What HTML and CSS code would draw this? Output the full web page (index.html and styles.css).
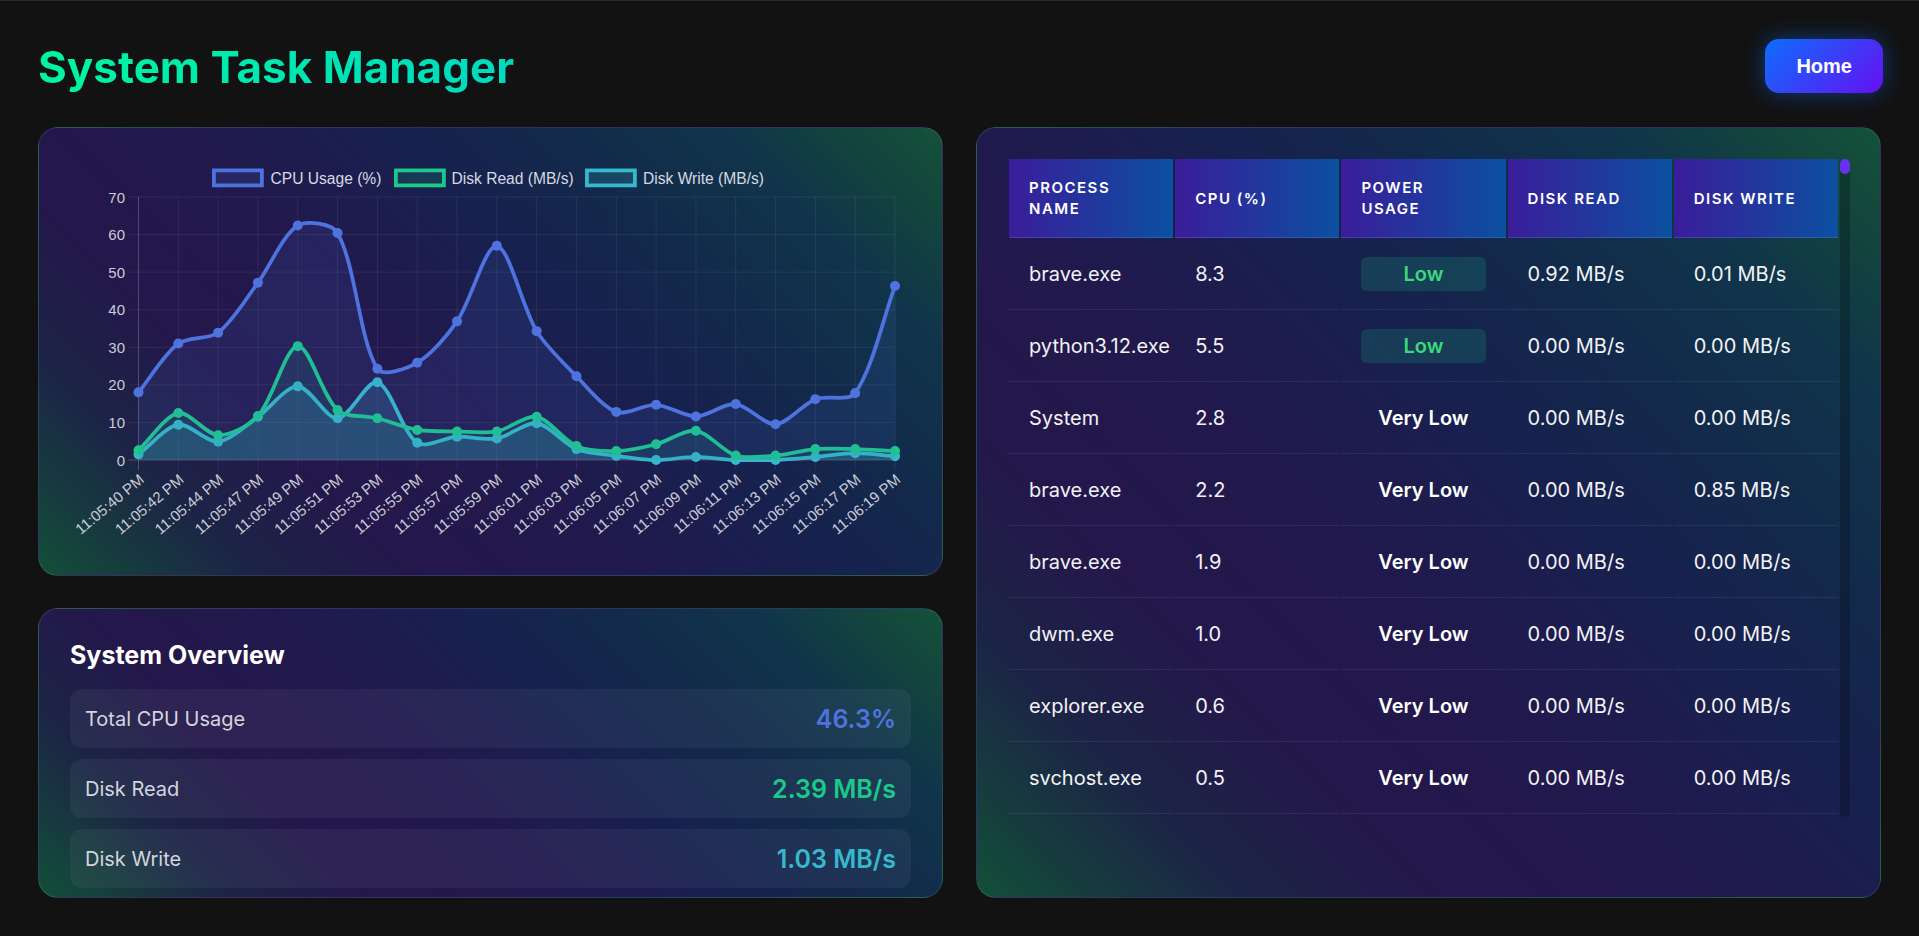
FILE: index.html
```html
<!DOCTYPE html>
<html lang="en">
<head>
<meta charset="utf-8">
<title>System Task Manager</title>
<link rel="stylesheet" href="styles.css">
</head>
<body>
<div class="page">
  <header class="topbar">
    <h1 class="title">System Task Manager</h1>
    <button class="home-btn" type="button">Home</button>
  </header>

  <main class="layout">
    <div class="left-col">
      <section class="card chart-card">
        <svg class="chart" viewBox="69 158 843 387" xmlns="http://www.w3.org/2000/svg">
          <g class="legend">
            <rect class="lg-box lg-cpu" x="213.9" y="170.4" width="48" height="15"/>
            <text class="lg-text" x="270.5" y="178">CPU Usage (%)</text>
            <rect class="lg-box lg-rd" x="395.9" y="170.4" width="48" height="15"/>
            <text class="lg-text" x="451.5" y="178">Disk Read (MB/s)</text>
            <rect class="lg-box lg-wr" x="586.9" y="170.4" width="48" height="15"/>
            <text class="lg-text" x="643" y="178">Disk Write (MB/s)</text>
          </g>
          <g id="grid"></g>
          <g class="y-labels">
            <text x="125" y="460">0</text>
            <text x="125" y="422.4">10</text>
            <text x="125" y="384.9">20</text>
            <text x="125" y="347.3">30</text>
            <text x="125" y="309.7">40</text>
            <text x="125" y="272.1">50</text>
            <text x="125" y="234.6">60</text>
            <text x="125" y="197">70</text>
          </g>
          <g class="x-labels">
            <text transform="translate(141.5 477) rotate(-40)">11:05:40 PM</text>
            <text transform="translate(181.3 477) rotate(-40)">11:05:42 PM</text>
            <text transform="translate(221.1 477) rotate(-40)">11:05:44 PM</text>
            <text transform="translate(261 477) rotate(-40)">11:05:47 PM</text>
            <text transform="translate(300.8 477) rotate(-40)">11:05:49 PM</text>
            <text transform="translate(340.6 477) rotate(-40)">11:05:51 PM</text>
            <text transform="translate(380.4 477) rotate(-40)">11:05:53 PM</text>
            <text transform="translate(420.2 477) rotate(-40)">11:05:55 PM</text>
            <text transform="translate(460 477) rotate(-40)">11:05:57 PM</text>
            <text transform="translate(499.8 477) rotate(-40)">11:05:59 PM</text>
            <text transform="translate(539.7 477) rotate(-40)">11:06:01 PM</text>
            <text transform="translate(579.5 477) rotate(-40)">11:06:03 PM</text>
            <text transform="translate(619.3 477) rotate(-40)">11:06:05 PM</text>
            <text transform="translate(659.1 477) rotate(-40)">11:06:07 PM</text>
            <text transform="translate(698.9 477) rotate(-40)">11:06:09 PM</text>
            <text transform="translate(738.7 477) rotate(-40)">11:06:11 PM</text>
            <text transform="translate(778.6 477) rotate(-40)">11:06:13 PM</text>
            <text transform="translate(818.4 477) rotate(-40)">11:06:15 PM</text>
            <text transform="translate(858.2 477) rotate(-40)">11:06:17 PM</text>
            <text transform="translate(898 477) rotate(-40)">11:06:19 PM</text>
          </g>
          <g id="plot"></g>
        </svg>
      </section>

      <section class="card overview-card">
        <h2 class="overview-title">System Overview</h2>
        <div class="stats">
          <div class="stat">
            <span class="stat-label">Total CPU Usage</span>
            <span class="stat-value v-cpu">46.3%</span>
          </div>
          <div class="stat">
            <span class="stat-label">Disk Read</span>
            <span class="stat-value v-read">2.39 MB/s</span>
          </div>
          <div class="stat">
            <span class="stat-label">Disk Write</span>
            <span class="stat-value v-write">1.03 MB/s</span>
          </div>
        </div>
      </section>
    </div>

    <section class="card table-card">
      <div class="table-wrap">
        <div class="table-viewport">
          <table class="proc-table">
            <thead>
              <tr>
                <th>Process<br>Name</th>
                <th>CPU (%)</th>
                <th>Power<br>Usage</th>
                <th>Disk Read</th>
                <th>Disk Write</th>
              </tr>
            </thead>
            <tbody>
              <tr><td>brave.exe</td><td>8.3</td><td><span class="power low">Low</span></td><td>0.92 MB/s</td><td>0.01 MB/s</td></tr>
              <tr><td>python3.12.exe</td><td>5.5</td><td><span class="power low">Low</span></td><td>0.00 MB/s</td><td>0.00 MB/s</td></tr>
              <tr><td>System</td><td>2.8</td><td><span class="power vlow">Very Low</span></td><td>0.00 MB/s</td><td>0.00 MB/s</td></tr>
              <tr><td>brave.exe</td><td>2.2</td><td><span class="power vlow">Very Low</span></td><td>0.00 MB/s</td><td>0.85 MB/s</td></tr>
              <tr><td>brave.exe</td><td>1.9</td><td><span class="power vlow">Very Low</span></td><td>0.00 MB/s</td><td>0.00 MB/s</td></tr>
              <tr><td>dwm.exe</td><td>1.0</td><td><span class="power vlow">Very Low</span></td><td>0.00 MB/s</td><td>0.00 MB/s</td></tr>
              <tr><td>explorer.exe</td><td>0.6</td><td><span class="power vlow">Very Low</span></td><td>0.00 MB/s</td><td>0.00 MB/s</td></tr>
              <tr><td>svchost.exe</td><td>0.5</td><td><span class="power vlow">Very Low</span></td><td>0.00 MB/s</td><td>0.00 MB/s</td></tr>
            </tbody>
          </table>
        </div>
        <div class="scroll-track"><div class="scroll-thumb"></div></div>
      </div>
    </section>
  </main>
</div>
<script src="script.js"></script>
</body>
</html>
```

FILE: styles.css
```css
* { box-sizing: border-box; }

html, body { margin: 0; padding: 0; }

body {
  background: #121212;
  color: #ffffff;
  font-family: Inter, "Noto Sans", sans-serif;
  min-height: 100vh;
  border-top: 1px solid #2a2a2a;
}

.page {
  padding: 38px 38px 36px;
}

/* header */
.topbar {
  display: flex;
  justify-content: space-between;
  align-items: center;
  margin: 0 -2px 34px 0;
}

.title {
  margin: 0;
  padding-top: 2px;
  font-size: 44px;
  line-height: 52px;
  font-weight: 700;
  background: linear-gradient(90deg, #00f5a0 0%, #00d9c0 100%);
  -webkit-background-clip: text;
  background-clip: text;
  color: transparent;
}

.home-btn {
  font-family: "Liberation Sans", Arial, sans-serif;
  font-weight: 700;
  font-size: 20px;
  color: #ffffff;
  height: 54px;
  padding: 0 31px;
  border: 0;
  border-radius: 14px;
  background: linear-gradient(135deg, #0d6efd 0%, #6610f2 100%);
  box-shadow: 0 0 22px rgba(13, 110, 253, 0.45);
}

/* layout */
.layout {
  display: grid;
  grid-template-columns: 1fr 1fr;
  gap: 33px;
}

.left-col {
  display: flex;
  flex-direction: column;
  gap: 32px;
}

.card {
  border: 1px solid rgba(255, 255, 255, 0.1);
  border-radius: 20px;
  background: linear-gradient(45deg,
    #125038 0%,
    #163c3e 7%,
    #1c2446 16%,
    #24174b 28%,
    #21194d 44%,
    #18204e 58%,
    #122a4b 72%,
    #10354a 84%,
    #13453d 93%,
    #145239 100%);
}

/* chart */
.chart-card {
  padding: 30px;
}

.chart {
  display: block;
  width: 100%;
  height: 387px;
  overflow: visible;
}

.lg-box { stroke-width: 3.75; }
.lg-cpu { stroke: #4e73df; fill: rgba(78, 115, 223, 0.15); }
.lg-rd { stroke: #1cc88a; fill: rgba(28, 200, 138, 0.15); }
.lg-wr { stroke: #36b9cc; fill: rgba(54, 185, 204, 0.2); }

.lg-text,
.y-labels text,
.x-labels text {
  font-family: "Liberation Sans", Arial, sans-serif;
  font-size: 15px;
  dominant-baseline: central;
}

.lg-text { fill: #d8d9e2; font-size: 15.6px; }

.y-labels text {
  fill: #c9cbd6;
  text-anchor: end;
}

.x-labels text {
  fill: #c9cbd6;
  text-anchor: end;
}

.gl { stroke: rgba(255, 255, 255, 0.07); stroke-width: 1; }
.axis-y { stroke: rgba(255, 255, 255, 0.16); stroke-width: 1; }
.axis-x { stroke: rgba(255, 120, 170, 0.22); stroke-width: 1; }

.ds-line { fill: none; stroke-width: 3.75; stroke-linejoin: round; }

/* overview */
.overview-card {
  padding: 31px 31px 9px;
}

.overview-title {
  margin: 0 0 19px;
  font-size: 25px;
  line-height: 30px;
  font-weight: 700;
  color: #ffffff;
}

.stats {
  display: flex;
  flex-direction: column;
  gap: 11px;
}

.stat {
  height: 59px;
  display: flex;
  align-items: center;
  justify-content: space-between;
  padding: 0 15px;
  border-radius: 12px;
  background: rgba(255, 255, 255, 0.05);
}

.stat-label {
  font-size: 20px;
  color: #d3d5de;
}

.stat-value {
  font-size: 25px;
  font-weight: 600;
}

.v-cpu { color: #4e73df; }
.v-read { color: #1cc88a; }
.v-write { color: #36b9cc; }

/* table */
.table-card {
  padding: 31px 30px;
}

.table-wrap {
  display: flex;
  height: 658px;
}

.table-viewport {
  flex: 1;
  overflow: hidden;
}

.proc-table {
  width: 100%;
  table-layout: fixed;
  border-collapse: separate;
  border-spacing: 2.5px 0;
}

.proc-table th {
  padding: 18px 20px;
  text-align: left;
  font-size: 15px;
  line-height: 21px;
  font-weight: 600;
  letter-spacing: 1.5px;
  text-transform: uppercase;
  color: #ffffff;
  background: linear-gradient(90deg, #3a1d9a 0%, #0b50a0 100%);
  border-bottom: 1px solid rgba(255, 255, 255, 0.12);
}

.proc-table td {
  padding: 18.5px 20px;
  font-size: 20px;
  line-height: 34px;
  color: #f2f2f5;
  white-space: nowrap;
  border-bottom: 1px solid rgba(255, 255, 255, 0.07);
}

.power {
  display: block;
  height: 34px;
  line-height: 34px;
  text-align: center;
  border-radius: 6px;
  font-weight: 600;
}

.power.low {
  background: rgba(28, 200, 138, 0.17);
  color: #3bd97b;
}

.power.vlow {
  color: #ffffff;
}

.scroll-track {
  width: 10px;
  border-radius: 5px;
  background: rgba(0, 0, 0, 0.22);
}

.scroll-thumb {
  height: 15px;
  border-radius: 5px;
  background: #6a2ff0;
}
```

FILE: script.js
```js
(function () {
  var NS = 'http://www.w3.org/2000/svg';
  var X0 = 138.5, X1 = 895, DX = (X1 - X0) / 19;
  var Y0 = 460, YT = 197, YS = (Y0 - YT) / 70, T = 0.3;

  var sets = [
    { color: '#36b9cc', fill: 'rgba(54,185,204,0.2)',
      data: [1.5, 9.4, 4.9, 11.5, 19.6, 11.1, 20.7, 4.6, 6.2, 5.7, 9.8, 2.9, 1.1, 0.0, 0.8, 0.0, 0.0, 0.8, 1.8, 1.03] },
    { color: '#1cc88a', fill: 'rgba(28,200,138,0.12)',
      data: [2.6, 12.5, 6.6, 11.7, 30.3, 13.3, 11.1, 8.0, 7.6, 7.6, 11.5, 3.7, 2.4, 4.2, 7.8, 1.2, 1.2, 2.9, 2.9, 2.39] },
    { color: '#4e73df', fill: 'rgba(78,115,223,0.12)',
      data: [18.0, 31.0, 33.9, 47.2, 62.4, 60.4, 24.3, 25.9, 36.9, 57.0, 34.3, 22.3, 12.8, 14.7, 11.6, 14.9, 9.5, 16.2, 17.8, 46.3] }
  ];

  function el(tag, attrs, parent) {
    var e = document.createElementNS(NS, tag);
    for (var k in attrs) e.setAttribute(k, attrs[k]);
    parent.appendChild(e);
    return e;
  }
  function clampY(y) { return Math.max(YT, Math.min(Y0, y)); }

  var grid = document.getElementById('grid');
  var plot = document.getElementById('plot');

  for (var v = 0; v <= 70; v += 10) {
    var gy = Y0 - v * YS;
    el('line', { x1: 128.5, x2: X1, y1: gy, y2: gy, 'class': 'gl' }, grid);
  }
  for (var i = 0; i < 20; i++) {
    var gx = X0 + i * DX;
    el('line', { x1: gx, x2: gx, y1: YT, y2: 470, 'class': 'gl' }, grid);
  }
  el('line', { x1: X0, x2: X0, y1: YT, y2: 470, 'class': 'axis-y' }, grid);
  el('line', { x1: 128.5, x2: X1, y1: Y0, y2: Y0, 'class': 'axis-x' }, grid);

  sets.forEach(function (s) {
    var pts = s.data.map(function (val, idx) {
      return { x: X0 + idx * DX, y: Y0 - val * YS };
    });
    pts.forEach(function (cur, idx) {
      var prev = pts[idx - 1] || cur, next = pts[idx + 1] || cur;
      var d01 = Math.hypot(cur.x - prev.x, cur.y - prev.y);
      var d12 = Math.hypot(next.x - cur.x, next.y - cur.y);
      var s01 = d01 / (d01 + d12), s12 = d12 / (d01 + d12);
      if (!isFinite(s01)) s01 = 0;
      if (!isFinite(s12)) s12 = 0;
      var fa = T * s01, fb = T * s12;
      cur.c1x = cur.x - fa * (next.x - prev.x);
      cur.c1y = clampY(cur.y - fa * (next.y - prev.y));
      cur.c2x = cur.x + fb * (next.x - prev.x);
      cur.c2y = clampY(cur.y + fb * (next.y - prev.y));
    });
    var d = 'M' + pts[0].x.toFixed(2) + ',' + pts[0].y.toFixed(2);
    for (var j = 1; j < pts.length; j++) {
      var a = pts[j - 1], b = pts[j];
      d += ' C' + a.c2x.toFixed(2) + ',' + a.c2y.toFixed(2) + ' ' +
        b.c1x.toFixed(2) + ',' + b.c1y.toFixed(2) + ' ' +
        b.x.toFixed(2) + ',' + b.y.toFixed(2);
    }
    var last = pts[pts.length - 1];
    el('path', { d: d + ' L' + last.x.toFixed(2) + ',' + Y0 + ' L' + pts[0].x.toFixed(2) + ',' + Y0 + ' Z',
      fill: s.fill, stroke: 'none' }, plot);
    el('path', { d: d, 'class': 'ds-line', stroke: s.color }, plot);
    pts.forEach(function (p) {
      el('circle', { cx: p.x.toFixed(2), cy: p.y.toFixed(2), r: 5, fill: s.color }, plot);
    });
  });
})();
```
